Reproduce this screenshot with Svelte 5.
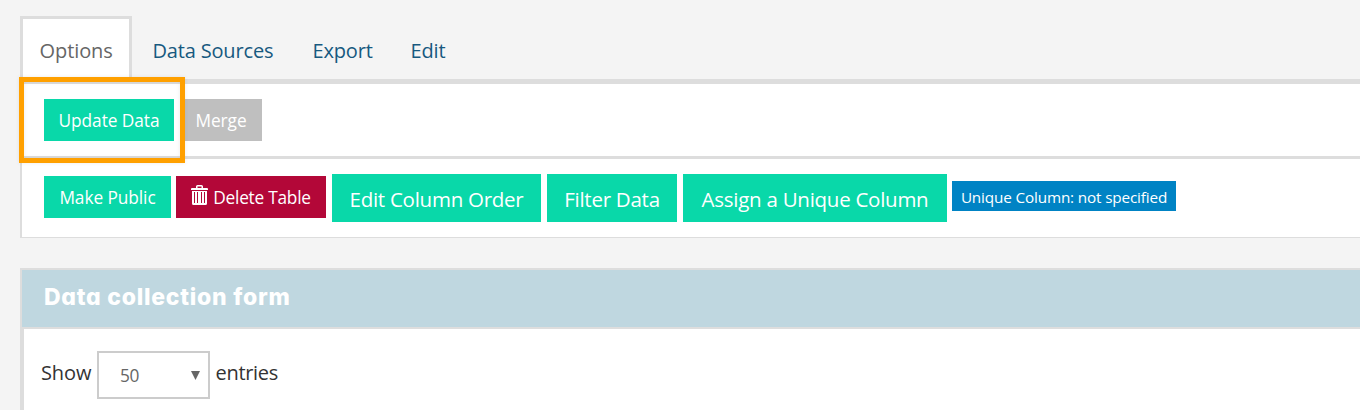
<script>
  const tabs = [
    { label: 'Data Sources', width: 121 },
    { label: 'Export', width: 59 },
    { label: 'Edit', width: 36 }
  ];
</script>

<main>
  <nav class="tabs">
    <a class="tab active"><span>Options</span></a>
    {#each tabs as tab}
      <a class="tab" style="width: {tab.width}px"><span>{tab.label}</span></a>
    {/each}
  </nav>
  <section class="toolbar">
    <div class="row first">
      <button class="btn update">Update Data</button>
      <button class="btn merge">Merge</button>
      <div class="highlight"></div>
    </div>
    <div class="row second">
      <button class="btn public">Make Public</button>
      <button class="btn delete">
        <svg width="18" height="20" viewBox="0 0 18 20" fill="#fff">
          <path fill-rule="evenodd" d="M5 3V1.5Q5 0 6.5 0H10.5Q12 0 12 1.5V3H16Q17 3 17 4V5H0V4Q0 3 1 3ZM6.5 1.5V3H10.5V1.5Z" />
          <path fill-rule="evenodd" d="M1 6H16V18.5Q16 20 14.5 20H2.5Q1 20 1 18.5ZM3 7V18H4V7ZM6 7V18H7V7ZM10 7V18H11V7ZM13 7V18H14V7Z" />
        </svg>
        <span>Delete Table</span>
      </button>
      <button class="btn big order">Edit Column Order</button>
      <button class="btn big filter">Filter Data</button>
      <button class="btn big assign">Assign a Unique Column</button>
      <span class="badge">Unique Column: not specified</span>
    </div>
  </section>
  <section class="card">
    <h2>Data collection form</h2>
    <div class="body">
      <span class="show">Show</span>
      <div class="select">
        <span>50</span>
        <svg width="9" height="9" viewBox="0 0 9 9"><path d="M0 0H9L4.5 9Z" fill="#666" /></svg>
      </div>
      <span class="entries">entries</span>
    </div>
  </section>
</main>

<style>
  :global(body) { background: #f4f4f4; overflow: hidden; }
  main {
    box-sizing: border-box;
    height: 410px;
    padding: 16px 0 0 20px;
    overflow: hidden;
    font-family: "Open Sans", "Noto Sans", sans-serif;
    font-stretch: 93%;
    white-space: nowrap;
    background: #f4f4f4;
  }
  .tabs { display: flex; height: 63px; }
  .tab {
    box-sizing: border-box;
    margin-right: 39px;
    padding-top: 19px;
    font-size: 20px;
    font-weight: 370;
    line-height: 32px;
    letter-spacing: -0.17px;
    color: #17597f;
  }
  .tab.active {
    width: 112px;
    margin-right: 20.5px;
    padding: 16px 0 0 16.5px;
    border: 3px solid #ddd;
    border-bottom: 0;
    background: #fff;
    color: #666;
    letter-spacing: -0.08px;
  }
  .toolbar {
    box-sizing: border-box;
    height: 159px;
    border-top: 5px solid #ddd;
    border-left: 2px solid #ddd;
    border-bottom: 1px solid #ddd;
    background: #fff;
  }
  .row { display: flex; align-items: center; padding-left: 22px; }
  .first { position: relative; height: 72px; border-bottom: 3px solid #ddd; }
  .second { height: 78px; box-sizing: border-box; }
  .btn {
    display: flex;
    align-items: center;
    justify-content: center;
    box-sizing: border-box;
    height: 42px;
    padding: 0;
    border: 0;
    background: #09d8a9;
    color: #fff;
    font: inherit;
    font-stretch: 93%;
    font-size: 17.3px;
    letter-spacing: -0.07px;
    white-space: nowrap;
  }
  .update { width: 130px; margin-right: 6px; }
  .merge { width: 82px; background: #bfbfbf; }
  .highlight {
    position: absolute;
    left: -3px;
    top: -7px;
    box-sizing: border-box;
    width: 166px;
    height: 86px;
    border: 5px solid #ffa000;
    box-shadow: 0 0 4px rgba(0, 0, 0, 0.08), inset 0 0 4px rgba(0, 0, 0, 0.08);
  }
  .public { width: 127px; margin: 0 5px 2px 0; padding-top: 1px; }
  .delete { width: 150px; margin: 0 6px 2px 0; padding-top: 1px; gap: 4px; background: #b30738; letter-spacing: -0.25px; }
  .delete svg { margin-top: -5px; }
  .big { height: 48px; font-size: 20.5px; letter-spacing: -0.26px; margin-right: 6px; padding-top: 2px; }
  .order { width: 209px; }
  .filter { width: 130px; }
  .assign { width: 264px; margin-right: 5px; }
  .badge {
    display: flex;
    align-items: center;
    justify-content: center;
    width: 224px;
    height: 30px;
    margin-top: -4px;
    padding-top: 2px;
    box-sizing: border-box;
    background: #0083c4;
    color: #fff;
    font-size: 15.3px;
    letter-spacing: -0.16px;
  }
  .card { margin-top: 30px; border-top: 2px solid #ddd; }
  h2 {
    box-sizing: border-box;
    height: 59px;
    margin: 0;
    padding: 11px 0 0 22px;
    border-left: 2px solid #ddd;
    border-bottom: 2px solid #ddd;
    background: #bfd7e0;
    color: #fff;
    font: 800 23px/32px Inter, sans-serif;
    font-stretch: 100%;
    font-feature-settings: "cv11";
    letter-spacing: 0.75px;
  }
  .body {
    display: flex;
    box-sizing: border-box;
    height: 90px;
    padding: 22px 0 0 17px;
    border-left: 4px solid #ddd;
    background: #fff;
    color: #333;
    font-size: 20px;
    font-weight: 370;
    line-height: 44px;
    letter-spacing: -0.3px;
  }
  .show { width: 56px; letter-spacing: -0.1px; }
  .select {
    display: flex;
    align-items: center;
    justify-content: space-between;
    box-sizing: border-box;
    width: 113px;
    height: 48px;
    margin-right: 5.5px;
    padding: 0 8px 0 21px;
    border: 2px solid #ccc;
    font-size: 17.3px;
    color: #666;
  }
  .select span { padding-top: 2px; }
</style>
